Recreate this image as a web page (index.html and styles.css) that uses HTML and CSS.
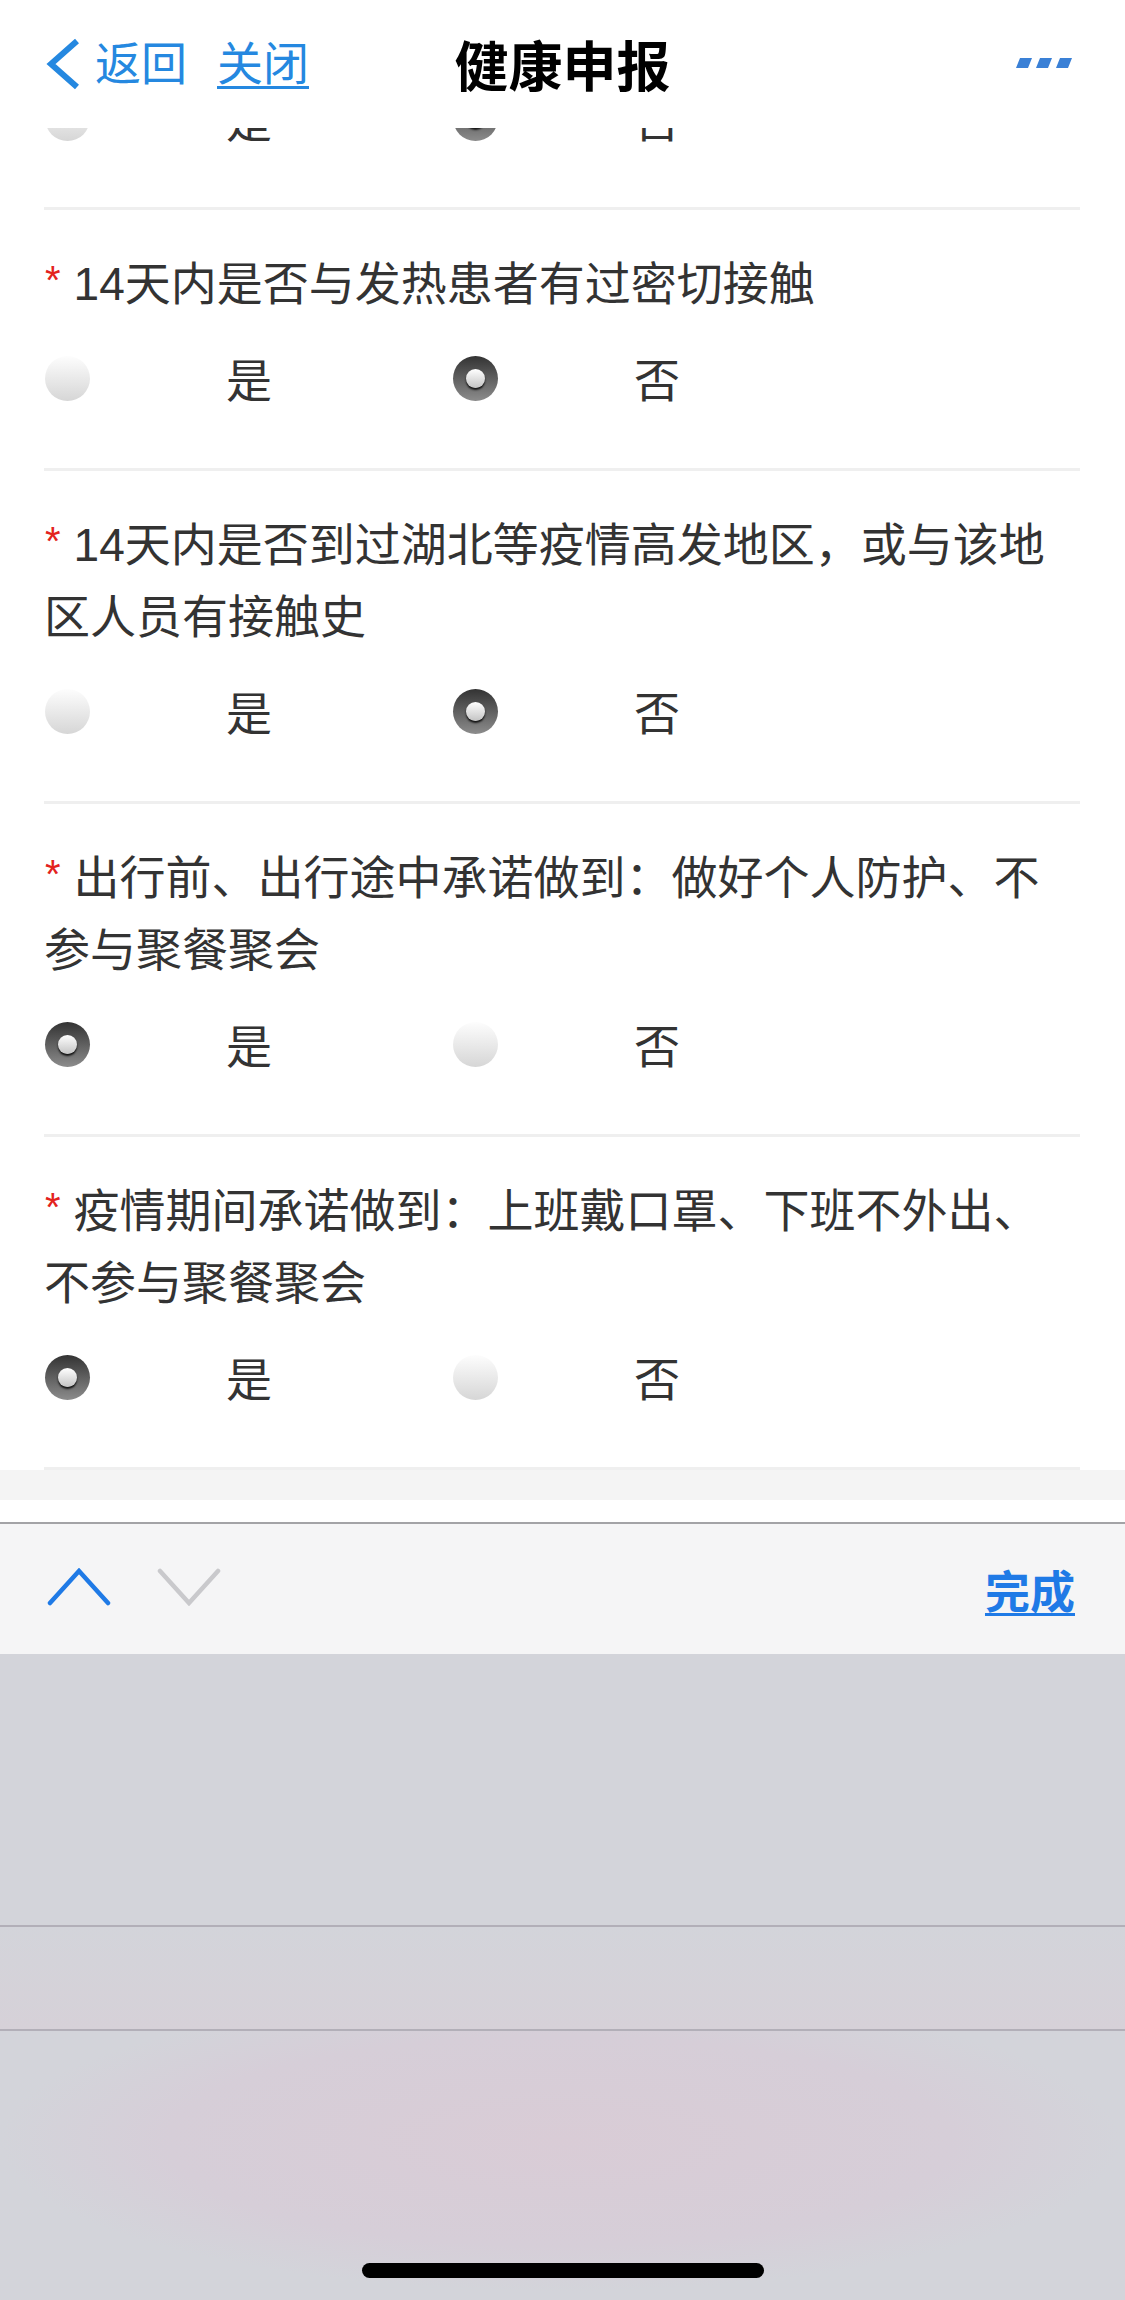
FILE: index.html
```html
<!DOCTYPE html>
<html lang="zh-CN">
<head>
    <meta charset="UTF-8">
    <meta name="viewport" content="width=device-width, initial-scale=1.0">
    <title>健康申报</title>
    <link rel="stylesheet" href="styles.css">
</head>
<body>

    <!-- Top bar (stays over the scrolled form) -->
    <header class="nav">
        <div class="nav-left">
            <svg class="back-icon" width="36" height="52" viewBox="0 0 36 52">
                <polyline points="32,3 6,26 32,49" fill="none" stroke="#2588e0" stroke-width="6" stroke-linejoin="miter"/>
            </svg>
            <a class="nav-link">返回</a>
            <a class="nav-link close">关闭</a>
        </div>
        <h1 class="nav-title">健康申报</h1>
        <div class="nav-right">
            <svg width="56" height="10" viewBox="0 0 56 10">
                <polygon points="4,0 16,0 12,10 0,10" fill="#3a80d6"/>
                <polygon points="24,0 36,0 32,10 20,10" fill="#3a80d6"/>
                <polygon points="44,0 56,0 52,10 40,10" fill="#3a80d6"/>
            </svg>
        </div>
    </header>

    <!-- Form -->
    <main class="form">
        <div class="item item-cut">
            <div class="options">
                <label class="opt"><span class="radio"></span><span class="opt-text">是</span></label>
                <label class="opt"><span class="radio checked"></span><span class="opt-text">否</span></label>
            </div>
        </div>

        <div class="item">
            <p class="question required">14天内是否与发热患者有过密切接触</p>
            <div class="options">
                <label class="opt"><span class="radio"></span><span class="opt-text">是</span></label>
                <label class="opt"><span class="radio checked"></span><span class="opt-text">否</span></label>
            </div>
        </div>

        <div class="item">
            <p class="question required">14天内是否到过湖北等疫情高发地区，或与该地区人员有接触史</p>
            <div class="options">
                <label class="opt"><span class="radio"></span><span class="opt-text">是</span></label>
                <label class="opt"><span class="radio checked"></span><span class="opt-text">否</span></label>
            </div>
        </div>

        <div class="item">
            <p class="question required">出行前、出行途中承诺做到：做好个人防护、不参与聚餐聚会</p>
            <div class="options">
                <label class="opt"><span class="radio checked"></span><span class="opt-text">是</span></label>
                <label class="opt"><span class="radio"></span><span class="opt-text">否</span></label>
            </div>
        </div>

        <div class="item">
            <p class="question required">疫情期间承诺做到：上班戴口罩、下班不外出、不参与聚餐聚会</p>
            <div class="options">
                <label class="opt"><span class="radio checked"></span><span class="opt-text">是</span></label>
                <label class="opt"><span class="radio"></span><span class="opt-text">否</span></label>
            </div>
        </div>
    </main>

    <div class="form-end"></div>
    <div class="kb-gap"></div>

    <!-- Keyboard accessory bar -->
    <div class="toolbar">
        <div class="arrows">
            <svg width="64" height="38" viewBox="0 0 64 38">
                <polyline points="3,35 32,3 61,35" fill="none" stroke="#1f7ae6" stroke-width="4.5" stroke-linecap="round"/>
            </svg>
            <svg width="64" height="38" viewBox="0 0 64 38">
                <polyline points="3,3 32,35 61,3" fill="none" stroke="#c9c9cc" stroke-width="4.5" stroke-linecap="round"/>
            </svg>
        </div>
        <a class="done">完成</a>
    </div>

    <div class="keyboard">
        <div class="kb-row kb-top"></div>
        <div class="kb-row kb-mid"></div>
        <div class="kb-row kb-bottom">
            <div class="home-bar"></div>
        </div>
    </div>

</body>
</html>
```

FILE: styles.css
```css
* {
    box-sizing: border-box;
    margin: 0;
    padding: 0;
}
body {
    width: 1125px;
    background-color: #ffffff;
    font-family: 'Liberation Sans', 'Noto Sans CJK SC', sans-serif;
    color: #333;
}
.nav {
    position: fixed;
    top: 0;
    left: 0;
    width: 1125px;
    height: 128px;
    background-color: #ffffff;
    display: grid;
    grid-template-columns: 1fr auto 1fr;
    align-items: center;
    z-index: 10;
}
.nav-left {
    display: flex;
    align-items: center;
    padding-left: 45px;
}
.back-icon {
    margin-right: 14px;
}
.nav-link {
    font-size: 46px;
    color: #2588e0;
    line-height: 1;
}
.nav-link.close {
    margin-left: 30px;
    text-decoration: underline;
    text-underline-offset: 6px;
    text-decoration-thickness: 3px;
}
.nav-title {
    font-size: 54px;
    font-weight: bold;
    color: #000;
    line-height: 1;
    font-family: 'Noto Sans CJK SC', sans-serif;
}
.nav-right {
    display: flex;
    justify-content: flex-end;
    padding-right: 53px;
    padding-bottom: 3px;
}
.form {
    background-color: #ffffff;
}
.item {
    margin: 0 45px 0 44px;
    padding: 34px 0 60px;
    border-bottom: 3px solid #efefef;
}
.item-cut {
    padding-top: 88px;
    padding-bottom: 59px;
}
.question {
    font-size: 46px;
    line-height: 72px;
    color: #333;
    margin-bottom: 28px;
}
.question.required::before {
    content: "*";
    color: #e3231d;
    font-size: 40px;
    margin-right: 13px;
    margin-left: 1px;
    vertical-align: 6px;
}
.options {
    display: flex;
    height: 60px;
    align-items: center;
    padding-left: 1px;
}
.opt {
    width: 408px;
    display: flex;
    align-items: center;
}
.opt-text {
    margin-left: 136px;
    font-size: 46px;
    line-height: 1;
    color: #333;
    padding-top: 6px;
}
.radio {
    width: 45px;
    height: 45px;
    border-radius: 50%;
    background: linear-gradient(#fdfdfd, #d6d6d6);
    display: flex;
    align-items: center;
    justify-content: center;
}
.radio.checked {
    background: linear-gradient(#333, #8c8c8c);
}
.radio.checked::after {
    content: "";
    width: 19px;
    height: 19px;
    border-radius: 50%;
    background: linear-gradient(#ffffff, #c4c4c4);
    box-shadow: 0 2px 2px #111;
}
.form-end {
    height: 30px;
    background-color: #f4f4f4;
}
.kb-gap {
    height: 22px;
    background-color: #ffffff;
}
.toolbar {
    height: 132px;
    border-top: 2px solid #a3a3a6;
    background-color: #f5f5f6;
    display: flex;
    align-items: center;
    justify-content: space-between;
    padding: 0 50px 0 47px;
}
.arrows {
    display: flex;
    gap: 46px;
    padding-bottom: 4px;
}
.done {
    font-size: 45px;
    font-weight: bold;
    color: #1f7ae6;
    font-family: 'Noto Sans CJK SC', sans-serif;
    text-decoration: underline;
    text-underline-offset: 4px;
    text-decoration-thickness: 3px;
    line-height: 1;
}
.keyboard {
    height: 647px;
    background-color: #d3d4da;
}
.kb-row {
    border-bottom: 2px solid #b2afb8;
}
.kb-top {
    height: 273px;
}
.kb-mid {
    height: 104px;
    background: linear-gradient(#d3d4da, #d6d1d8);
}
.kb-bottom {
    height: 270px;
    border-bottom: none;
    background: radial-gradient(ellipse 560px 150px at 560px 110px, #d9ccd6, #d6ced8 70%, #d3d4da);
    display: flex;
    align-items: flex-end;
    justify-content: center;
    padding-bottom: 23px;
}
.home-bar {
    width: 402px;
    height: 15px;
    border-radius: 8px;
    background-color: #000;
}
```
